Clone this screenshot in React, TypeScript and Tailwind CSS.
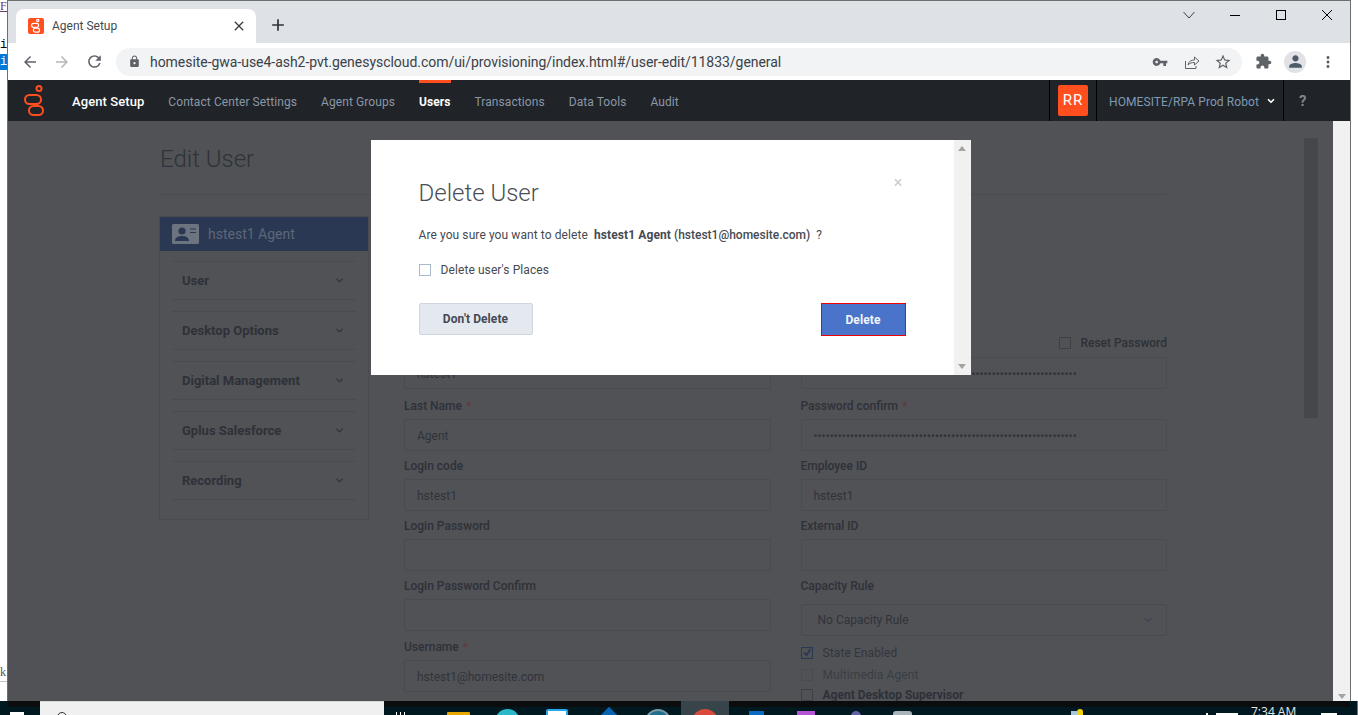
import { ChevronDown } from 'lucide-react'
import {
  MdAdd,
  MdArrowBack,
  MdArrowForward,
  MdClose,
  MdExtension,
  MdLock,
  MdMoreVert,
  MdPerson,
  MdRefresh,
  MdStarBorder,
  MdVpnKey,
} from 'react-icons/md'

const navItems = ['Contact Center Settings', 'Agent Groups', 'Users', 'Transactions', 'Data Tools', 'Audit']
const sections = ['User', 'Desktop Options', 'Digital Management', 'Gplus Salesforce', 'Recording']
const dots = '•'.repeat(65)

function GenesysLogo() {
  return (
    <svg width="22" height="32" viewBox="0 0 22 32" fill="none" stroke="#ff4f1f" strokeWidth="2">
      <circle cx="15" cy="3.500" r="2.500" />
      <rect x="1" y="10" width="16" height="9" rx="4.500" />
      <rect x="5" y="21" width="14" height="9" rx="4.500" />
    </svg>
  )
}

function Favicon() {
  return (
    <div className="flex h-4 w-4 items-center justify-center rounded-[2px] bg-[#ff4f1f]">
      <svg width="10" height="14" viewBox="0 0 22 32" fill="none" stroke="#ffffff" strokeWidth="2.600">
        <circle cx="15" cy="3.500" r="2.500" />
        <rect x="1" y="10" width="16" height="9" rx="4.500" />
        <rect x="5" y="21" width="14" height="9" rx="4.500" />
      </svg>
    </div>
  )
}

function ContactIcon() {
  return (
    <svg width="27" height="20" viewBox="0 0 27 20">
      <rect width="27" height="20" rx="1.500" fill="#6c7480" />
      <circle cx="10" cy="7" r="3.600" fill="#2a3854" />
      <path d="M3 17c0-3.600 3-5 7-5s7 1.400 7 5z" fill="#2a3854" />
      <path d="M18 5h6M18 8.500h6" stroke="#2a3854" strokeWidth="1" />
    </svg>
  )
}

function Field({ label, value, required, mt }: { label: string; value?: string; required?: boolean; mt?: string }) {
  return (
    <div className={`h-[60px] ${mt ?? ''}`}>
      <div className="h-5 text-xs leading-[22px] font-medium text-[#2e3138]">
        {label}
        {required && <span className="ml-1 text-[#5f3b3e]">*</span>}
      </div>
      <div className="mt-1 h-8 rounded-[2px] border border-[#494b4f] pl-[12px] text-xs leading-[32px] text-[#303339]">
        {value}
      </div>
    </div>
  )
}

function Check({ checked, faint }: { checked?: boolean; faint?: boolean }) {
  return (
    <div
      className={`flex h-3 w-3 items-center justify-center border ${
        checked ? 'border-[#2a3854]' : faint ? 'border-[#494b4f]' : 'border-[#3d4045]'
      }`}
    >
      {checked && (
        <svg width="12" height="12" viewBox="0 0 12 12" fill="none" stroke="#2a3854" strokeWidth="2">
          <path d="M2.500 5.500l3 3L10.500 1" />
        </svg>
      )}
    </div>
  )
}

function TopChrome() {
  return (
    <div className="shrink-0">
      <div className="flex h-[42px] items-end bg-[#dee1e6]">
        <div className="ml-2 flex h-[34px] w-[240px] items-center rounded-t-lg bg-white pl-3 pr-[9px]">
          <Favicon />
          <span className="ml-2 text-xs text-[#45494e]">Agent Setup</span>
          <MdClose size={16} className="ml-auto text-[#3c4043]" />
        </div>
        <div className="mb-[8px] ml-[12px] text-[#2f3236]">
          <MdAdd size={20} />
        </div>
        <div className="mb-[13px] ml-auto flex h-[30px] items-center text-[#202124]">
          <svg width="12" height="8" viewBox="0 0 12 8" fill="none" stroke="#3c4043">
            <path d="M.5 1l5.500 6 5.500-6" />
          </svg>
          <div className="ml-[35px] h-px w-[10px] bg-black" />
          <div className="ml-[36px] h-[10px] w-[10px] border border-black" />
          <svg className="ml-[36px] mr-[18px]" width="10" height="10" viewBox="0 0 10 10" stroke="#000000">
            <path d="M0 0l10 10M10 0L0 10" />
          </svg>
        </div>
      </div>
      <div className="flex h-[37px] items-center bg-white">
        <div className="ml-[13px] flex w-[95px] items-center text-[#5f6368]">
          <MdArrowBack size={18} />
          <MdArrowForward size={18} className="ml-[14px] text-[#b4b6b9]" />
          <MdRefresh size={19} className="ml-[14px]" />
        </div>
        <div className="flex h-7 w-[1126px] items-center rounded-full bg-[#f1f3f4] pl-[12px] pr-[10px]">
          <MdLock size={13} className="text-[#5f6368]" />
          <span className="ml-[9px] text-sm tracking-[-0.04px] text-[#3b4148]">
            homesite-gwa-use4-ash2-pvt.genesyscloud.com/ui/provisioning/index.html#/user-edit/11833/general
          </span>
          <MdVpnKey size={16} className="ml-auto text-[#5f6368]" />
          <svg className="ml-4" width="16" height="16" viewBox="0 0 16 16" fill="none" stroke="#5f6368">
            <path d="M1.500 7v7.500h10.500V12M4 11c.5-3.500 3-5 6.500-5V3L15 7l-4.500 4V8.500C8 8.500 5.500 9 4 11z" />
          </svg>
          <MdStarBorder size={18} className="ml-[14px] text-[#5f6368]" />
        </div>
        <MdExtension size={17} className="ml-[13px] text-[#5f6368]" />
        <div className="ml-[12px] flex h-[22px] w-[22px] items-center justify-center rounded-full bg-[#e0e2e6]">
          <MdPerson size={19} className="text-[#4d5a6c]" />
        </div>
        <MdMoreVert size={18} className="ml-[13px] text-[#5f6368]" />
      </div>
    </div>
  )
}

function AppNav() {
  return (
    <div className="flex h-[41px] shrink-0 items-center bg-[#202327] text-xs tracking-[0.08px]">
      <div className="ml-4 w-12">
        <GenesysLogo />
      </div>
      <span className="pt-[2px] text-[13px] font-medium text-white">Agent Setup</span>
      <div className="ml-6 flex h-full items-center gap-6 text-[#8b97a6]">
        {navItems.map((item) =>
          item === 'Users' ? (
            <span key={item} className="flex h-full items-center border-t-[3px] border-[#ff4f1f] pb-px font-bold text-white">
              {item}
            </span>
          ) : (
            <span key={item} className="pt-[2px]">
              {item}
            </span>
          ),
        )}
      </div>
      <div className="ml-auto flex h-full items-center">
        <div className="flex h-full w-[48px] items-center justify-center border-x border-black">
          <div className="flex h-[31px] w-[30px] items-center justify-center rounded-[2px] bg-[#ff4f1f] text-[15px] tracking-[1px] text-white">
            RR
          </div>
        </div>
        <div className="flex h-full w-[187px] items-center border-r border-black pl-3 text-[#7f9ab5]">
          <span className="pt-[2px]">HOMESITE/RPA Prod Robot</span>
          <ChevronDown size={10} strokeWidth={4} className="ml-[7px] text-white" />
        </div>
        <div className="w-[66px] pt-[2px] pl-[15px] text-[15px] font-bold text-[#80858c]">?</div>
      </div>
    </div>
  )
}

function EditForm() {
  return (
    <div className="min-w-0 flex-1 pl-[151px]">
      <h2 className="ml-px pt-[22px] text-2xl leading-8 font-light text-[#2f3238]">Edit User</h2>
      <div className="mt-[19px] ml-px h-px w-[1007px] bg-[#494b4f]" />
      <div className="mt-[21px] flex items-start">
        <div className="h-[304px] w-[210px] border border-[#494b4f]">
          <div className="flex h-[34px] items-center bg-[#2a3854] pl-3">
            <ContactIcon />
            <span className="ml-[9px] text-sm text-[#5d6775]">hstest1 Agent</span>
          </div>
          {sections.map((name, i) => (
            <div
              key={name}
              className={`mx-3 flex h-[39px] items-center justify-between border-y border-[#494b4f] pr-[11px] pl-[10px] text-[13px] font-bold text-[#2e3138] ${
                i === 0 ? 'mt-[10px]' : 'mt-[11px]'
              }`}
            >
              {name}
              <ChevronDown size={11} strokeWidth={2.500} className="text-[#2e3138]" />
            </div>
          ))}
        </div>
        <div className="ml-[35px] grid w-[763px] grid-cols-2 gap-x-[30px] pt-[117px]">
          <div>
            <Field label="First Name" value="hstest1" required mt="mb-[2px]" />
            <Field label="Last Name" value="Agent" required />
            <Field label="Login code" value="hstest1" />
            <Field label="Login Password" />
            <Field label="Login Password Confirm" />
            <Field label="Username" value="hstest1@homesite.com" required mt="pt-px" />
          </div>
          <div>
            <div className="relative mb-[2px]">
              <Field label="Password" value={dots} required />
              <div className="absolute top-[2px] right-0 flex items-center gap-[9px] text-xs font-medium text-[#2e3138]">
                <Check />
                Reset Password
              </div>
            </div>
            <Field label="Password confirm" value={dots} required />
            <Field label="Employee ID" value="hstest1" />
            <Field label="External ID" />
            <div className="h-5 text-xs leading-[22px] font-medium text-[#2e3138]">Capacity Rule</div>
            <div className="mt-[9px] flex h-8 items-center justify-between rounded-[2px] border border-[#494b4f] pr-[12px] pl-4 text-xs text-[#303339]">
              No Capacity Rule
              <ChevronDown size={12} className="text-[#2a3854]" />
            </div>
            <div className="mt-[7px] flex h-5 items-center gap-[10px] text-xs tracking-[0.1px] text-[#33363d]">
              <Check checked />
              State Enabled
            </div>
            <div className="mt-[2px] flex h-5 items-center gap-[10px] text-xs tracking-[0.1px] text-[#3a3d44]">
              <Check faint />
              Multimedia Agent
            </div>
            <div className="flex h-5 items-center gap-[10px] text-xs font-bold text-[#2e3138]">
              <Check />
              Agent Desktop Supervisor
            </div>
          </div>
        </div>
      </div>
    </div>
  )
}

function DeleteModal() {
  return (
    <div className="absolute inset-0 flex justify-center pt-[19px]">
      <div className="flex h-[235px] w-[600px] bg-white">
        <div className="relative flex-1 px-12 pt-[37px] text-xs tracking-[0.09px] text-[#464a51]">
          <h3 className="text-2xl leading-8 font-light tracking-normal text-[#4a4f57]">Delete User</h3>
          <button className="absolute top-[35px] right-[51px] text-base leading-4 text-[#c9cbce]">×</button>
          <p className="mt-[18px] leading-4">
            Are you sure you want to delete <b className="ml-[3px] font-bold">hstest1 Agent</b>{' '}
            <span className="font-medium tracking-normal">(hstest1@homesite.com)</span> <span className="ml-[3px]">?</span>
          </p>
          <label className="mt-[19px] flex h-4 items-center gap-[10px]">
            <span className="h-3 w-3 border border-[#a9b8cc]" />
            Delete user's Places
          </label>
          <div className="mt-[25px] flex items-start justify-between">
            <button className="h-8 w-[114px] rounded-[2px] border border-[#cfd6df] bg-[#e4e9f0] font-bold text-[#444a54]">
              Don't Delete
            </button>
            <button className="h-[33px] w-[85px] border border-[#f00000] bg-[#4a74c9] font-bold text-[#f1f4fa]">
              Delete
            </button>
          </div>
        </div>
        <div className="flex w-[17px] flex-col items-center justify-between bg-[#f1f1f1] py-[6px]">
          <div className="h-0 w-0 border-x-[4px] border-b-[5px] border-x-transparent border-b-[#a3a3a3]" />
          <div className="h-0 w-0 border-x-[4px] border-t-[5px] border-x-transparent border-t-[#a3a3a3]" />
        </div>
      </div>
    </div>
  )
}

function Taskbar() {
  return (
    <div className="relative flex h-[14px] shrink-0 items-start overflow-hidden bg-[#00181f] [&>*]:shrink-0">
      <div className="absolute top-0 right-2 left-2 h-[6px] bg-[#0b0c0d]" />
      <div className="relative mt-[11px] ml-[10px] h-1 w-[14px] bg-white" />
      <div className="relative ml-[16px] h-[14px] w-[344px] border-t border-[#d5d5d5] bg-[#f0f0f0] pt-[10px] pl-[17px]">
        <div className="h-[10px] w-[10px] rounded-full border border-[#333333]" />
      </div>
      <div className="relative mt-[11px] ml-[12px] flex gap-[3px]">
        <div className="h-1 w-px bg-white" />
        <div className="h-1 w-px bg-white" />
        <div className="h-1 w-px bg-white" />
      </div>
      <div className="relative mt-[11px] ml-[42px] h-1 w-[23px] rounded-t-[1px] bg-[#e8a800]" />
      <div className="relative mt-[8px] ml-[25px] h-[26px] w-[25px] rounded-full bg-[#2bb8c8]" />
      <div className="relative mt-[8px] ml-[26px] h-[8px] w-[22px] rounded-t-[2px] border-2 border-[#29a8f0] bg-white" />
      <div className="relative mt-[10px] ml-[31px] h-[20px] w-[20px] rotate-45 bg-[#0a64b4]" />
      <div className="relative mt-[8px] ml-[26px] h-[26px] w-[26px] rounded-full border-2 border-[#7d98a6] bg-[#1f6f8f]" />
      <div className="relative ml-[10px] flex h-[14px] w-[48px] justify-center bg-[#37444a] pt-[8px]">
        <div className="h-[26px] w-[26px] rounded-full bg-[#d94a3d]" />
      </div>
      <div className="relative mt-[10px] ml-[20px] h-[14px] w-[15px] bg-[#0a6cc0]" />
      <div className="relative mt-[10px] ml-[33px] h-[14px] w-[18px] bg-[#b455d6]" />
      <div className="relative mt-[10px] ml-[36px] h-[10px] w-[10px] rounded-full bg-[#6264a7]" />
      <div className="relative mt-[10px] ml-[32px] h-[10px] w-[19px] rounded-t-[3px] bg-[#a9b4ba]" />
      <div className="relative mt-[10px] ml-[159px] h-2 w-[6px] bg-[#a7c7dd]" />
      <div className="relative mt-[8px] h-2 w-[6px] rounded-t-full bg-[#f2d20b]" />
      <div className="relative mt-[12px] ml-[123px] h-[2px] w-[2px] bg-white" />
      <div className="relative mt-[12px] ml-[8px] h-[2px] w-[22px] bg-white" />
      <div className="relative mt-[3px] ml-[13px] font-['Open_Sans',sans-serif] text-xs leading-[16px] whitespace-nowrap text-[#e6e6e6]">7:34 AM</div>
      <div className="relative mt-[12px] ml-[25px] h-[2px] w-[16px] bg-white" />
      <div className="relative ml-[20px] h-[14px] w-px bg-[#6f7a80]" />
    </div>
  )
}

export default function App() {
  return (
    <div className="flex h-[715px] w-[1358px] flex-col overflow-hidden bg-white font-['Roboto',sans-serif]">
      <div className="flex min-h-0 flex-1">
        <div className="flex w-[7px] shrink-0 flex-col overflow-hidden font-['Liberation_Serif',serif] text-xs">
          <span className="h-3 leading-3 text-[#6b3a6b] underline">Fi</span>
          <span className="mt-[25px] font-['Liberation_Mono',monospace] leading-4 text-black">i</span>
          <span className="mt-px h-4 bg-[#0078d7] font-['Liberation_Mono',monospace] leading-4 text-white">i</span>
          <span className="mt-[596px] leading-3 text-[#555555]">k</span>
          <div className="mt-[3px] h-px bg-[#c4c4c4]" />
        </div>
        <div className="flex min-w-0 flex-1 flex-col border-x border-t border-[#6e6e6e]">
          <TopChrome />
          <AppNav />
          <div className="flex min-h-0 flex-1">
            <div className="relative flex min-w-0 flex-1 overflow-hidden bg-[#505256]">
              <EditForm />
              <div className="mt-[17px] mr-[15px] w-[14px] shrink-0">
                <div className="h-[280px] bg-[#45474a]" />
              </div>
              <DeleteModal />
            </div>
            <div className="flex w-[17px] shrink-0 flex-col items-center justify-end bg-[#f1f1f1] pb-[2px]">
              <div className="h-0 w-0 border-x-[4px] border-t-[5px] border-x-transparent border-t-[#a3a3a3]" />
            </div>
          </div>
        </div>
        <div className="w-[7px] shrink-0" />
      </div>
      <Taskbar />
    </div>
  )
}
